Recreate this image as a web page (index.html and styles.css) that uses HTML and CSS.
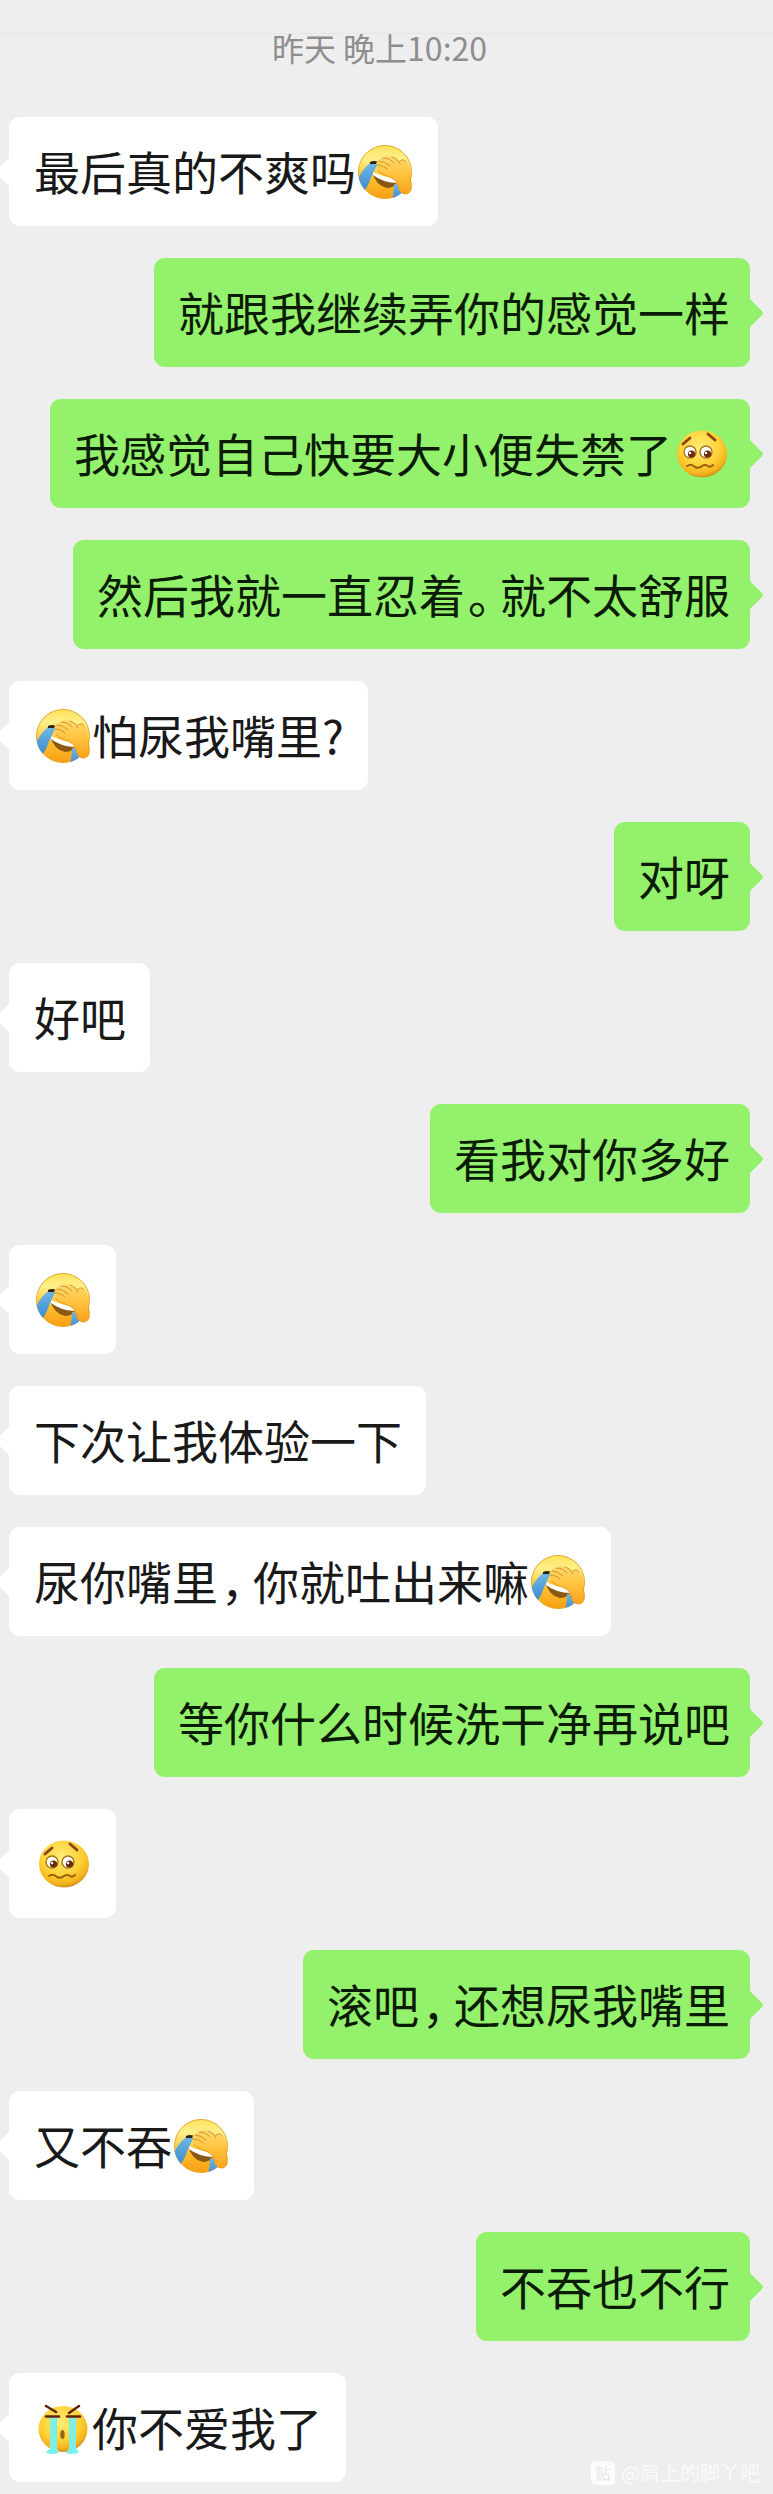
FILE: index.html
```html
<!DOCTYPE html>
<html lang="zh-CN">
<head>
<meta charset="utf-8">
<meta name="viewport" content="width=device-width, initial-scale=1">
<title>聊天记录</title>
<link rel="stylesheet" href="styles.css">
</head>
<body>
<svg class="defs" aria-hidden="true">
  <defs>
    <linearGradient id="g-face" x1="0" y1="0" x2="0" y2="1">
      <stop offset="0" stop-color="#fde25c"/><stop offset=".25" stop-color="#fff08c"/><stop offset=".62" stop-color="#fdbf2c"/><stop offset="1" stop-color="#f89f14"/>
    </linearGradient>
    <linearGradient id="g-hand" x1="0" y1="0" x2="0" y2="1">
      <stop offset="0" stop-color="#ffdc70"/><stop offset=".5" stop-color="#ffc13c"/><stop offset="1" stop-color="#fba31b"/>
    </linearGradient>
    <linearGradient id="g-tear" x1="0" y1="0" x2="0" y2="1">
      <stop offset="0" stop-color="#6db8e6"/><stop offset="1" stop-color="#3a86cc"/>
    </linearGradient>
    <radialGradient id="g-ball" cx=".45" cy=".35" r=".65">
      <stop offset="0" stop-color="#ffed78"/><stop offset=".6" stop-color="#fed236"/><stop offset=".88" stop-color="#f5b31c"/><stop offset="1" stop-color="#d38e1c"/>
    </radialGradient>
    <clipPath id="c-face"><circle cx="29" cy="29" r="27"/></clipPath>
    <symbol id="facepalm" viewBox="0 0 58 58">
      <circle cx="29" cy="29" r="26.500" fill="url(#g-face)" stroke="#e9a82b"/>
      <g clip-path="url(#c-face)">
        <path d="M16 29 Q26 36 41 38 Q40 45 31 45 Q20 43 16 29Z" fill="#8a5812"/>
        <path d="M17 29 Q27 34 42 36 L40 40 Q26 39 17 32Z" fill="#fff"/>
        <path d="M14 20 L22 20 Q16 31 12 42 L7 50 L0 40 Q4 29 14 20Z" fill="url(#g-tear)"/>
        <path d="M38 41 L45 43 L46 58 L36 58 Q38 49 38 41Z" fill="url(#g-tear)"/>
      </g>
      <path d="M14 19 Q18 17 22 19 L20 21 L14 21Z" fill="#2d2414"/>
      <path d="M21 22 Q19 19 23 18 Q22 15 27 15 Q29 11 36 14 Q41 15 44 18 Q48 15 51 19 Q54 24 54 32 Q56 42 55 47 Q52 53 46 50 Q43 49 42 42 Q41 37 34 34 Q23 32 22 28 Q20 25 21 22Z" fill="url(#g-hand)"/>
      <path d="M23 18 Q29 18 34 23 M21 22 Q27 22 31 26 M27 15 Q34 15 38 20 M36 14 Q42 16 44 21 M44 18 Q48 15 50 19" fill="none" stroke="#d3922c" stroke-width="1" stroke-linecap="round"/>
      <path d="M22 28 Q26 32 34 34 Q41 37 42 42 Q43 49 46 50 Q52 53 55 47 Q56 42 54 34" fill="none" stroke="#ec9a1e" stroke-width="1" stroke-linecap="round"/>
    </symbol>
    <symbol id="worried" viewBox="0 0 58 58">
      <ellipse cx="30" cy="29" rx="25" ry="23.500" fill="url(#g-ball)"/>
      <circle cx="18" cy="27" r="6" fill="#fff" stroke="#a97619" stroke-width="1.400"/>
      <circle cx="34" cy="27" r="6" fill="#fff" stroke="#a97619" stroke-width="1.400"/>
      <circle cx="19.500" cy="29" r="3.600" fill="#6a2a0b"/><circle cx="35.500" cy="29" r="3.600" fill="#6a2a0b"/>
      <circle cx="18" cy="28" r="1.300" fill="#fff"/><circle cx="34" cy="28" r="1.300" fill="#fff"/>
      <path d="M11 19 L18 13 M36 9 L43 15" fill="none" stroke="#8a4216" stroke-width="2.800" stroke-linecap="round"/>
      <path d="M15 41 Q19 38 23 42 Q27 44 30 41 Q33 39 36 41 Q38 43 41 40" fill="none" stroke="#9a6013" stroke-width="2" stroke-linecap="round"/>
    </symbol>
    <symbol id="sobbing" viewBox="0 0 58 58">
      <ellipse cx="29" cy="30" rx="24.500" ry="23" fill="url(#g-ball)"/>
      <path d="M16 18 H23 V49 Q25 52 24 54 Q18 56 12 54 Q13 51 16 50Z M35 18 H42 V49 Q45 52 44 54 Q38 56 32 54 Q33 51 35 50Z" fill="#7defe9"/>
      <path d="M12 7 L22 13 M45 7 L35 14 M12 17.500 H25 M33 17.500 H46" fill="none" stroke="#5d260b" stroke-width="2.600" stroke-linecap="round"/>
      <ellipse cx="28.500" cy="35.500" rx="2.200" ry="4.500" fill="#9c6414"/>
    </symbol>
    <symbol id="tail" viewBox="0 0 13 30">
      <path d="M0 0 Q0 2 2 3 L12 13 Q14 15 12 17 L2 27 Q0 28 0 30Z" fill="currentColor"/>
    </symbol>
  </defs>
</svg>
<main class="chat">
  <header class="chat-head"></header>
  <time class="stamp">昨天 晚上10:20</time>
  <ol class="messages">
    <li class="message received"><p class="bubble">最后真的不爽吗<svg class="emoji" role="img" aria-label="笑哭捂脸"><use href="#facepalm"/></svg></p><svg class="tail"><use href="#tail"/></svg></li>
    <li class="message sent"><p class="bubble">就跟我继续弄你的感觉一样</p><svg class="tail"><use href="#tail"/></svg></li>
    <li class="message sent"><p class="bubble">我感觉自己快要大小便失禁了<svg class="emoji" role="img" aria-label="难过"><use href="#worried"/></svg></p><svg class="tail"><use href="#tail"/></svg></li>
    <li class="message sent"><p class="bubble">然后我就一直忍着<span class="punct">。</span>就不太舒服</p><svg class="tail"><use href="#tail"/></svg></li>
    <li class="message received"><p class="bubble"><svg class="emoji" role="img" aria-label="笑哭捂脸"><use href="#facepalm"/></svg>怕尿我嘴里?</p><svg class="tail"><use href="#tail"/></svg></li>
    <li class="message sent"><p class="bubble">对呀</p><svg class="tail"><use href="#tail"/></svg></li>
    <li class="message received"><p class="bubble">好吧</p><svg class="tail"><use href="#tail"/></svg></li>
    <li class="message sent"><p class="bubble">看我对你多好</p><svg class="tail"><use href="#tail"/></svg></li>
    <li class="message received"><p class="bubble"><svg class="emoji" role="img" aria-label="笑哭捂脸"><use href="#facepalm"/></svg></p><svg class="tail"><use href="#tail"/></svg></li>
    <li class="message received"><p class="bubble">下次让我体验一下</p><svg class="tail"><use href="#tail"/></svg></li>
    <li class="message received"><p class="bubble">尿你嘴里<span class="punct">，</span>你就吐出来嘛<svg class="emoji" role="img" aria-label="笑哭捂脸"><use href="#facepalm"/></svg></p><svg class="tail"><use href="#tail"/></svg></li>
    <li class="message sent"><p class="bubble">等你什么时候洗干净再说吧</p><svg class="tail"><use href="#tail"/></svg></li>
    <li class="message received"><p class="bubble"><svg class="emoji" role="img" aria-label="难过"><use href="#worried"/></svg></p><svg class="tail"><use href="#tail"/></svg></li>
    <li class="message sent"><p class="bubble">滚吧<span class="punct">，</span>还想尿我嘴里</p><svg class="tail"><use href="#tail"/></svg></li>
    <li class="message received"><p class="bubble">又不吞<svg class="emoji" role="img" aria-label="笑哭捂脸"><use href="#facepalm"/></svg></p><svg class="tail"><use href="#tail"/></svg></li>
    <li class="message sent"><p class="bubble">不吞也不行</p><svg class="tail"><use href="#tail"/></svg></li>
    <li class="message received"><p class="bubble"><svg class="emoji" role="img" aria-label="大哭"><use href="#sobbing"/></svg>你不爱我了</p><svg class="tail"><use href="#tail"/></svg></li>
  </ol>
  <div class="watermark"><span class="watermark-logo">贴</span><span>@肩上的脚丫吧</span></div>
</main>
</body>
</html>
```
FILE: styles.css
```css
* {
  box-sizing: border-box;
}

body {
  margin: 0;
  background: #eeeeee;
  font-family: "Noto Sans CJK SC", sans-serif;
}

.defs {
  position: absolute;
  width: 0;
  height: 0;
}

.chat {
  position: relative;
  display: flex;
  flex-direction: column;
  padding-bottom: 12px;
  overflow: hidden;
}

.chat-head {
  height: 34px;
  border-bottom: 1px solid #e5e5e5;
}

.stamp {
  padding-right: 14px;
  color: #8e8e8e;
  font-size: 32px;
  line-height: 26px;
  text-align: center;
}

.messages {
  display: flex;
  flex-direction: column;
  gap: 32px;
  margin: 0;
  padding: 57px 10px 0 0;
  list-style: none;
}

.message {
  display: flex;
  align-items: center;
}

.received {
  flex-direction: row-reverse;
  justify-content: flex-end;
  margin-left: -4px;
  color: #ffffff;
}

.sent {
  justify-content: flex-end;
  color: #94f16c;
}

.bubble {
  min-height: 109px;
  margin: 0;
  padding: 23px 20px 25px 24px;
  border-radius: 11px;
  background: currentColor;
  font-size: 46px;
  line-height: 61px;
  -webkit-text-fill-color: #0b1c06;
}

.received .bubble {
  padding: 23px 24px 25px 25px;
  -webkit-text-fill-color: #191919;
}

/* Half-width punctuation with its own breathing room */
.punct {
  margin: 0 9px 0 3px;
  font-feature-settings: "halt";
}

.emoji {
  display: inline-block;
  width: 58px;
  height: 58px;
  vertical-align: middle;
  margin: -12px 0 0;
}

.tail {
  flex: none;
  width: 13px;
  height: 30px;
}

.received .tail {
  transform: scaleX(-1);
}

.watermark {
  position: absolute;
  right: 13px;
  bottom: 8px;
  display: flex;
  align-items: center;
  gap: 6px;
  color: #fafafa;
  font-size: 20px;
  line-height: 26px;
}

.watermark-logo {
  width: 24px;
  height: 24px;
  border-radius: 5px;
  background: #fcfcfc;
  color: #e6e6e6;
  font-size: 15px;
  line-height: 24px;
  text-align: center;
}
```
